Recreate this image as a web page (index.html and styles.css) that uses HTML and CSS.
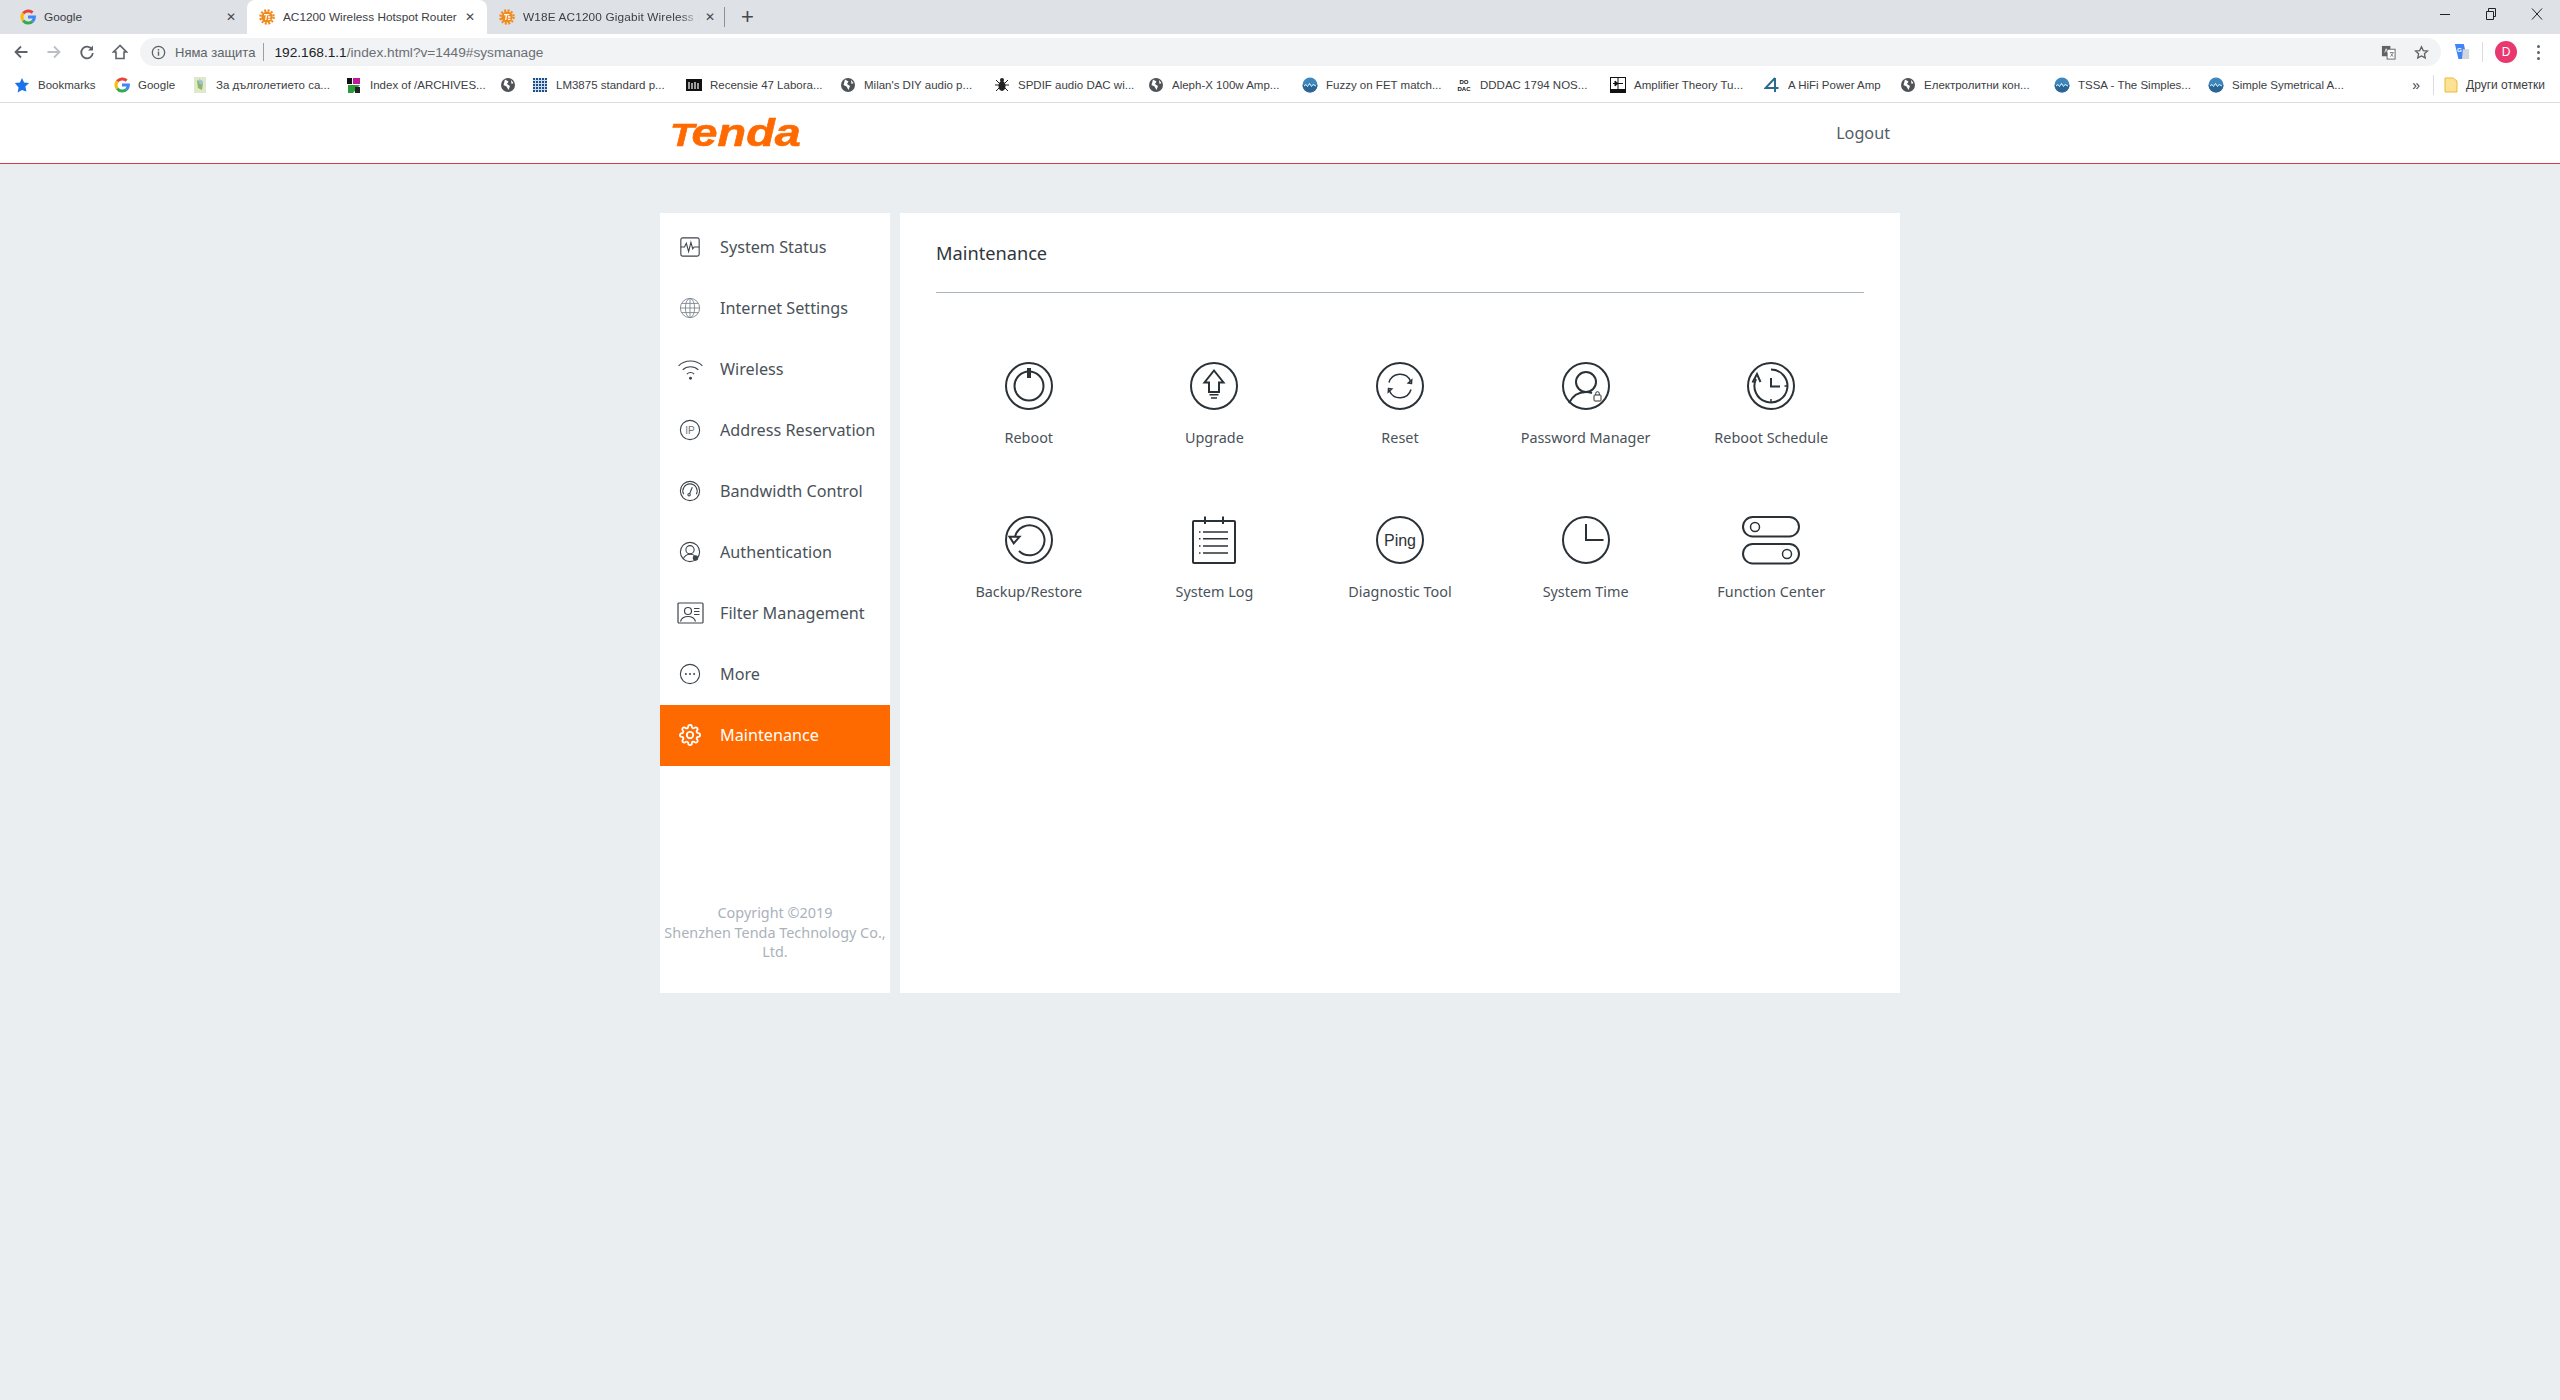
FILE: index.html
```html
<!DOCTYPE html>
<html lang="en">
<head>
  <meta charset="UTF-8">
  <title>AC1200 Wireless Hotspot Router</title>
  <link rel="stylesheet" href="styles.css">
</head>
<body>
  <svg class="defs" width="0" height="0">
    <defs>
      <g id="tenda-fav">
        <circle cx="8" cy="8" r="5.6" fill="#f08a1d"/>
        <circle cx="8" cy="8" r="6.6" fill="none" stroke="#f08a1d" stroke-width="2.4" stroke-dasharray="2 1.5"/>
        <path d="M5 5.6h5.4M7.6 5.6l-1 5.4M9 8h2.4M9 10.4h2.4" stroke="#fff" stroke-width="1.3" fill="none"/>
      </g>
      <g id="google-g" fill="none" stroke-width="3">
        <path d="M12.6 3.6A6.4 6.4 0 0 0 3.2 4.4" stroke="#ea4335"/>
        <path d="M3.2 4.4a6.4 6.4 0 0 0 0 7.2" stroke="#fbbc05"/>
        <path d="M3.2 11.6a6.4 6.4 0 0 0 9.4 .8" stroke="#34a853"/>
        <path d="M12.6 12.4A6.4 6.4 0 0 0 14.4 8H8" stroke="#4285f4"/>
      </g>
      <g id="earth">
        <circle cx="8" cy="8" r="7" fill="#4f5357"/>
        <path d="M5 2.5l3.5 2-1.5 2.5 3 2-1.500 4-2-3.500-3-1.500zM11 3l2.500 3-2 1z" fill="#fff"/>
      </g>
      <g id="wave">
        <circle cx="8" cy="8" r="7.500" fill="#3f86bd"/>
        <path d="M.5 8h15v0a7.500 7.500 0 0 1-15 0z" fill="#2a6596"/>
        <path d="M2 9l2-1.500 1.500 2 2-3 2 3 1.500-2 3 1.500" fill="none" stroke="#dff" stroke-width="1"/>
      </g>
    </defs>
  </svg>

  <div class="browser">
    <div class="tabstrip">
      <div class="tab tab-first">
        <svg class="fav" viewBox="0 0 16 16"><use href="#google-g"/></svg>
        <span class="tab-title">Google</span>
        <span class="tab-x">✕</span>
      </div>
      <div class="tab tab-active">
        <svg class="fav" viewBox="0 0 16 16"><use href="#tenda-fav"/></svg>
        <span class="tab-title">AC1200 Wireless Hotspot Router</span>
        <span class="tab-x">✕</span>
      </div>
      <div class="tab tab-last">
        <svg class="fav" viewBox="0 0 16 16"><use href="#tenda-fav"/></svg>
        <span class="tab-title">W18E AC1200 Gigabit Wireless H</span>
        <span class="tab-x">✕</span>
      </div>
      <span class="tab-new">+</span>
      <div class="win-controls">
        <svg width="12" height="12" viewBox="0 0 12 12"><path d="M1 6.500h10" stroke="#222" stroke-width="1"/></svg>
        <svg width="12" height="12" viewBox="0 0 12 12"><path d="M1.500 3.500h7v8h-7zM3.500 3.500v-3h7v8h-2" fill="none" stroke="#222"/></svg>
        <svg width="12" height="12" viewBox="0 0 12 12"><path d="M1 .5l10 11M11 .5l-10 11" stroke="#222" fill="none"/></svg>
      </div>
    </div>

    <div class="toolbar">
      <svg class="tool" viewBox="0 0 16 16"><path d="M14.500 8h-12M8 2.500L2.500 8 8 13.500" fill="none" stroke="#5f6368" stroke-width="1.800"/></svg>
      <svg class="tool" viewBox="0 0 16 16"><path d="M1.500 8h12M8 2.500L13.500 8 8 13.500" fill="none" stroke="#bcbfc3" stroke-width="1.800"/></svg>
      <svg class="tool" viewBox="0 0 16 16"><path d="M13 5.500A5.800 5.800 0 1 0 13.800 9" fill="none" stroke="#5f6368" stroke-width="1.800"/><path d="M14 1.500v5h-5z" fill="#5f6368"/></svg>
      <svg class="tool" viewBox="0 0 16 16"><path d="M8 1.500L1.500 8H4v6.500h8V8h2.500zM6.800 14.500" fill="none" stroke="#5f6368" stroke-width="1.600"/></svg>
      <div class="omnibox">
        <svg class="info" viewBox="0 0 16 16"><circle cx="8" cy="8" r="6.600" fill="none" stroke="#5f6368" stroke-width="1.400"/><path d="M8 7v4.500M8 4.200v1.600" stroke="#5f6368" stroke-width="1.500"/></svg>
        <span class="insecure">Няма защита</span>
        <span class="omni-sep"></span>
        <span class="url"><span class="url-host">192.168.1.1</span>/index.html?v=1449#sysmanage</span>
        <svg class="omni-icon omni-translate" viewBox="0 0 16 16"><rect x="1" y="1" width="9" height="11" fill="#5f6368"/><rect x="6.500" y="4.500" width="8.500" height="10.500" fill="#fff" stroke="#5f6368"/><path d="M4 8l1.500-4 1.500 4" stroke="#fff" fill="none" stroke-width=".8"/><path d="M9.500 8h4M10 12.500l3-4M10.500 9l2.500 3.500" stroke="#5f6368" fill="none" stroke-width=".8"/></svg>
        <svg class="omni-icon" viewBox="0 0 16 16"><path d="M8 1.800l1.900 4.100 4.500.5-3.300 3 .9 4.400L8 11.600l-4 2.200.9-4.400-3.300-3 4.500-.5z" fill="none" stroke="#5f6368" stroke-width="1.400"/></svg>
      </div>
      <svg class="ext" viewBox="0 0 18 18"><path d="M1 0h10l4 17H5z" fill="#4285f4"/><path d="M10 6h7v11h-8z" fill="#d3d6da"/><text x="3.500" y="9" class="ext-g">G</text></svg>
      <span class="tool-sep"></span>
      <span class="avatar">D</span>
      <span class="kebab"><i></i><i></i><i></i></span>
    </div>

    <div class="bookmarks">
      <div class="bm bm-first">
        <svg class="bm-icon" viewBox="0 0 16 16"><path d="M8 1l2.100 4.600 5 .5-3.700 3.400 1 4.900L8 12.900l-4.400 2.500 1-4.900L.9 6.100l5-.5z" fill="#1a73e8"/></svg>
        <span class="bm-label">Bookmarks</span>
      </div>
      <div class="bm bm-google">
        <svg class="bm-icon" viewBox="0 0 16 16"><use href="#google-g"/></svg>
        <span class="bm-label">Google</span>
      </div>
      <div class="bm">
        <svg class="bm-icon" viewBox="0 0 16 16"><rect x="2" width="12" height="16" fill="#dfe8c8"/><path d="M5 3l6 3-1 7-4-2z" fill="#8db46a"/><path d="M7 2l4 2-1 4-3-2z" fill="#9cc3dd"/></svg>
        <span class="bm-label">За дълголетието са...</span>
      </div>
      <div class="bm">
        <svg class="bm-icon" viewBox="0 0 16 16"><path d="M1 1h5v6H1z" fill="#111"/><path d="M7 1h7v6H7z" fill="#c0189a"/><path d="M2 8h12L7 16H2z" fill="#2c9a3a"/><path d="M9 10h5v6H9z" fill="#222"/></svg>
        <span class="bm-label">Index of /ARCHIVES...</span>
      </div>
      <div class="bm bm-bare">
        <svg class="bm-icon" viewBox="0 0 16 16"><use href="#earth"/></svg>
      </div>
      <div class="bm">
        <svg class="bm-icon" viewBox="0 0 16 16"><rect x="1" y="1" width="14" height="14" fill="#1d4e89"/><path d="M3.500 1v14M6.500 1v14M9.500 1v14M12.500 1v14M1 3.500h14M1 6.500h14M1 9.500h14M1 12.500h14" stroke="#cfe0f0"/></svg>
        <span class="bm-label">LM3875 standard p...</span>
      </div>
      <div class="bm">
        <svg class="bm-icon" viewBox="0 0 16 16"><rect y="2" width="16" height="12" fill="#111"/><path d="M3 5v7M6 6v6M9 5v7M12 6v6" stroke="#fff" stroke-width="1.200"/></svg>
        <span class="bm-label">Recensie 47 Labora...</span>
      </div>
      <div class="bm">
        <svg class="bm-icon" viewBox="0 0 16 16"><use href="#earth"/></svg>
        <span class="bm-label">Milan's DIY audio p...</span>
      </div>
      <div class="bm">
        <svg class="bm-icon" viewBox="0 0 16 16"><ellipse cx="8" cy="9" rx="3.500" ry="5" fill="#222"/><circle cx="8" cy="3" r="2" fill="#222"/><path d="M2 3l3 3M14 3l-3 3M1 8h4M15 8h-4M2 14l3-3M14 14l-3-3" stroke="#222"/></svg>
        <span class="bm-label">SPDIF audio DAC wi...</span>
      </div>
      <div class="bm">
        <svg class="bm-icon" viewBox="0 0 16 16"><use href="#earth"/></svg>
        <span class="bm-label">Aleph-X 100w Amp...</span>
      </div>
      <div class="bm">
        <svg class="bm-icon" viewBox="0 0 16 16"><use href="#wave"/></svg>
        <span class="bm-label">Fuzzy on FET match...</span>
      </div>
      <div class="bm">
        <svg class="bm-icon" viewBox="0 0 16 16"><text x="8" y="7" class="bm-tiny">DO</text><text x="8" y="14" class="bm-tiny">DAC</text></svg>
        <span class="bm-label">DDDAC 1794 NOS...</span>
      </div>
      <div class="bm">
        <svg class="bm-icon" viewBox="0 0 16 16"><rect x=".5" y=".5" width="15" height="15" fill="#fff" stroke="#111"/><path d="M8 1v11M3 6.500h10M5 4l3 2.500L5 9z" stroke="#111" fill="#111"/><rect x="1" y="12" width="14" height="3" fill="#111"/></svg>
        <span class="bm-label">Amplifier Theory Tu...</span>
      </div>
      <div class="bm bm-hifi">
        <svg class="bm-icon" viewBox="0 0 16 16"><path d="M11 1L1.500 11h13M11 1v14" fill="none" stroke="#2c6a8f" stroke-width="2"/></svg>
        <span class="bm-label">A HiFi Power Amp</span>
      </div>
      <div class="bm">
        <svg class="bm-icon" viewBox="0 0 16 16"><use href="#earth"/></svg>
        <span class="bm-label">Електролитни кон...</span>
      </div>
      <div class="bm">
        <svg class="bm-icon" viewBox="0 0 16 16"><use href="#wave"/></svg>
        <span class="bm-label">TSSA - The Simples...</span>
      </div>
      <div class="bm">
        <svg class="bm-icon" viewBox="0 0 16 16"><use href="#wave"/></svg>
        <span class="bm-label">Simple Symetrical A...</span>
      </div>
      <div class="bm-end">
        <span class="bm-more">»</span>
        <span class="bm-sep"></span>
        <svg class="bm-folder" viewBox="0 0 14 16"><path d="M1 1h8l4 3v11H1z" fill="#fde293" stroke="#e8b93c"/></svg>
        <span class="bm-label">Други отметки</span>
      </div>
    </div>
  </div>

  <header class="top">
    <div class="top-inner">
      <span class="logo"><span class="logo-t">T</span>enda</span>
      <a class="logout">Logout</a>
    </div>
  </header>

  <main class="wrap">
    <aside class="side">
      <nav class="menu">
        <a class="menu-item">
          <svg class="menu-icon" viewBox="0 0 24 24"><rect x="2" y="2" width="20" height="20" rx="2" class="ln"/><path d="M2 12h4l2-4 2.500 9 2.500-10 2 7 1.500-2H22" class="ln"/></svg>
          System Status
        </a>
        <a class="menu-item">
          <svg class="menu-icon muted" viewBox="0 0 24 24"><circle cx="12" cy="12" r="10.500" class="ln"/><ellipse cx="12" cy="12" rx="5" ry="10.500" class="ln"/><path d="M12 1.500v21M1.500 12h21M3 7h18M3 17h18" class="ln"/></svg>
          Internet Settings
        </a>
        <a class="menu-item">
          <svg class="menu-icon menu-icon-wide" viewBox="0 0 28 24"><path d="M1 8.500C8 1.500 20 1.500 27 8.500M5.500 13C10 8.500 18 8.500 22.500 13M10 17.500c2.200-2.200 5.800-2.200 8 0" class="ln"/><circle cx="14" cy="22" r="1.600" class="dot"/></svg>
          Wireless
        </a>
        <a class="menu-item">
          <svg class="menu-icon" viewBox="0 0 24 24"><circle cx="12" cy="12" r="10.500" class="ln"/><text x="12" y="16" class="ip-text">IP</text></svg>
          Address Reservation
        </a>
        <a class="menu-item">
          <svg class="menu-icon" viewBox="0 0 24 24"><circle cx="12" cy="12" r="10.500" class="ln"/><path d="M5 15.500a7.800 7.800 0 1 1 14 0" class="ln"/><path d="M14.500 8L11.500 15" class="ln"/><circle cx="11" cy="16" r="1.300" class="ln"/></svg>
          Bandwidth Control
        </a>
        <a class="menu-item">
          <svg class="menu-icon" viewBox="0 0 24 24"><circle cx="12" cy="12" r="10.500" class="ln"/><circle cx="12" cy="9.500" r="4.500" class="ln"/><path d="M4.500 19.500c1.500-3 4.500-5 7.500-5s4 .5 5 1.500" class="ln"/><circle cx="18" cy="18.500" r="3" class="dot"/></svg>
          Authentication
        </a>
        <a class="menu-item">
          <svg class="menu-icon menu-icon-wide" viewBox="0 0 27 22"><rect x="1" y="1" width="25" height="20" rx="1" class="ln"/><circle cx="11" cy="9" r="3.500" class="ln"/><path d="M3.500 19.500c1-3.500 4-5 7.500-5s6.500 1.500 7.500 5M17 6.500h5.500M17 9.500h5.500M17 12.500h5.500" class="ln"/></svg>
          Filter Management
        </a>
        <a class="menu-item">
          <svg class="menu-icon" viewBox="0 0 24 24"><circle cx="12" cy="12" r="10.500" class="ln"/><circle cx="7.500" cy="12" r="1.100" class="dot"/><circle cx="12" cy="12" r="1.100" class="dot"/><circle cx="16.500" cy="12" r="1.100" class="dot"/></svg>
          More
        </a>
        <a class="menu-item active">
          <svg class="menu-icon" viewBox="0 0 24 24"><path d="M19.400 15a1.650 1.650 0 0 0 .33 1.820l.06.06a2 2 0 0 1 0 2.830 2 2 0 0 1-2.830 0l-.06-.06a1.650 1.650 0 0 0-1.820-.33 1.650 1.650 0 0 0-1 1.510V21a2 2 0 0 1-2 2 2 2 0 0 1-2-2v-.09A1.650 1.650 0 0 0 9 19.400a1.650 1.650 0 0 0-1.820.33l-.06.06a2 2 0 0 1-2.830 0 2 2 0 0 1 0-2.830l.06-.06a1.650 1.650 0 0 0 .33-1.820 1.650 1.650 0 0 0-1.510-1H3a2 2 0 0 1-2-2 2 2 0 0 1 2-2h.09A1.650 1.650 0 0 0 4.600 9a1.650 1.650 0 0 0-.33-1.820l-.06-.06a2 2 0 0 1 0-2.830 2 2 0 0 1 2.830 0l.06.06a1.650 1.650 0 0 0 1.820.33H9a1.650 1.650 0 0 0 1-1.510V3a2 2 0 0 1 2-2 2 2 0 0 1 2 2v.09a1.650 1.650 0 0 0 1 1.510 1.650 1.650 0 0 0 1.820-.33l.06-.06a2 2 0 0 1 2.830 0 2 2 0 0 1 0 2.830l-.06.06a1.650 1.650 0 0 0-.33 1.820V9a1.650 1.650 0 0 0 1.510 1H21a2 2 0 0 1 2 2 2 2 0 0 1-2 2h-.09a1.650 1.650 0 0 0-1.510 1z" class="ln"/><circle cx="12" cy="12" r="3.500" class="ln"/></svg>
          Maintenance
        </a>
      </nav>
      <p class="copyright">Copyright ©2019<br>Shenzhen Tenda Technology Co., Ltd.</p>
    </aside>

    <section class="panel">
      <h2 class="panel-title">Maintenance</h2>
      <div class="tools">
        <a class="tool-item">
          <svg class="tool-icon" viewBox="0 0 48 48"><circle cx="24" cy="24" r="23" class="ln"/><circle cx="24" cy="24" r="14.500" class="ln"/><path d="M24 6v10" class="ln heavy"/></svg>
          <span>Reboot</span>
        </a>
        <a class="tool-item">
          <svg class="tool-icon" viewBox="0 0 48 48"><circle cx="24" cy="24" r="23" class="ln"/><path d="M24 8.500L14.500 20.500H19V30H29V20.500H33.500z" class="ln"/><path d="M19.500 32.800h9M21 36h6" class="ln thin"/></svg>
          <span>Upgrade</span>
        </a>
        <a class="tool-item">
          <svg class="tool-icon" viewBox="0 0 48 48"><circle cx="24" cy="24" r="23" class="ln"/><path d="M13 20.500A11.500 11.500 0 0 1 34.500 19M35 27.500A11.500 11.500 0 0 1 13.500 29" class="ln thin"/><path d="M35.500 21.500l-3.200-.5 3.400-3zM12.500 26.500l3.200.5-3.400 3z" class="ln thin"/></svg>
          <span>Reset</span>
        </a>
        <a class="tool-item">
          <svg class="tool-icon" viewBox="0 0 48 48"><circle cx="24" cy="24" r="23" class="ln"/><circle cx="24" cy="20" r="10" class="ln"/><path d="M7 41c3-6 9-11 17-11 2 0 4 .3 6 1" class="ln"/><rect x="32" y="33" width="7" height="6" rx=".8" class="ln hair"/><path d="M33.700 33v-1.500a1.800 1.800 0 0 1 3.600 0V33" class="ln hair"/></svg>
          <span>Password Manager</span>
        </a>
        <a class="tool-item">
          <svg class="tool-icon" viewBox="0 0 48 48"><circle cx="24" cy="24" r="23" class="ln"/><path d="M24 7.500A16.500 16.500 0 1 1 9 17" class="ln"/><path d="M5.500 20.500L10 12l3.500 8" class="ln"/><path d="M24 16v8.500h9" class="ln"/><path d="M24 37v3M37.500 24h3" class="ln thin"/></svg>
          <span>Reboot Schedule</span>
        </a>
        <a class="tool-item">
          <svg class="tool-icon" viewBox="0 0 48 48"><circle cx="24" cy="24" r="23" class="ln"/><path d="M10 20.500A15 15 0 1 1 14 35" class="ln"/><path d="M4.500 20.700h10L8.700 27.300z" class="ln"/></svg>
          <span>Backup/Restore</span>
        </a>
        <a class="tool-item">
          <svg class="tool-icon" viewBox="0 0 48 48"><rect x="3" y="5" width="42" height="42" rx="1" class="ln"/><path d="M15 .5V8M33 .5V8" class="ln"/><path d="M13 16h25M13 22.700h25M13 30h25M13 37h25" class="ln thin"/><path d="M9 16h1.500M9 22.700h1.500M9 30h1.500M9 37h1.500" class="ln thin"/></svg>
          <span>System Log</span>
        </a>
        <a class="tool-item">
          <svg class="tool-icon" viewBox="0 0 48 48"><circle cx="24" cy="24" r="23" class="ln"/><text x="24" y="29.500" class="ping-text">Ping</text></svg>
          <span>Diagnostic Tool</span>
        </a>
        <a class="tool-item">
          <svg class="tool-icon" viewBox="0 0 48 48"><circle cx="24" cy="24" r="23" class="ln"/><path d="M24 8v16h17.500" class="ln"/></svg>
          <span>System Time</span>
        </a>
        <a class="tool-item">
          <svg class="tool-icon tool-icon-wide" viewBox="0 0 58 48"><rect x="1" y="1" width="56" height="19.500" rx="9.700" class="ln"/><rect x="1" y="28" width="56" height="19.500" rx="9.700" class="ln"/><circle cx="13" cy="11" r="4.500" class="ln thin"/><circle cx="45" cy="38" r="4.500" class="ln thin"/></svg>
          <span>Function Center</span>
        </a>
      </div>
    </section>
  </main>
</body>
</html>
```

FILE: styles.css
```css
* {
  box-sizing: border-box;
}

body {
  margin: 0;
  min-height: 1400px;
  background: #eaeef1;
  font-family: "Noto Sans", "Open Sans", sans-serif;
  color: #4a5259;
}

.defs {
  display: block;
  height: 0;
}

/* === Browser chrome === */
.browser {
  font-family: "Liberation Sans", Arial, sans-serif;
  font-size: 11.8px;
  color: #3c4043;
}

.tabstrip {
  display: flex;
  align-items: center;
  height: 34px;
  background: #dee1e6;
}

.tab {
  display: flex;
  align-items: center;
  height: 34px;
  flex: none;
}

.tab-first {
  width: 247px;
  padding-left: 20px;
}

.tab-active {
  width: 240px;
  padding-left: 12px;
  background: #fff;
  border-radius: 8px 8px 0 0;
}

.tab-last {
  width: 238px;
  padding-left: 12px;
  border-right: 1px solid #8d9095;
  height: 20px;
}

.fav {
  width: 16px;
  height: 16px;
  flex: none;
  margin-right: 8px;
}

.tab-title {
  width: 182px;
  white-space: nowrap;
  overflow: hidden;
}

.tab-last .tab-title {
  letter-spacing: .15px;
  -webkit-mask-image: linear-gradient(to right, #000 158px, transparent 176px);
}

.tab-x {
  font-size: 12px;
  color: #45484c;
  font-family: "DejaVu Sans", sans-serif;
}

.tab-new {
  margin-left: 16px;
  font-size: 22px;
  color: #45484c;
  line-height: 20px;
}

.win-controls {
  display: flex;
  gap: 34px;
  margin-left: auto;
  padding: 0 17px 6px 0;
}

.toolbar {
  display: flex;
  align-items: center;
  height: 36px;
  background: #fff;
  padding-left: 13px;
}

.tool {
  width: 16px;
  height: 16px;
  flex: none;
  margin-right: 17px;
}

.omnibox {
  display: flex;
  align-items: center;
  flex: 1;
  height: 28px;
  margin-left: -5px;
  padding: 0 12px 0 11px;
  background: #f1f3f4;
  border-radius: 14px;
}

.info {
  width: 15px;
  height: 15px;
  margin-right: 9px;
}

.insecure {
  color: #5f6368;
  font-size: 13px;
}

.omni-sep {
  width: 1px;
  height: 18px;
  margin: 0 10px 0 8px;
  background: #9aa0a6;
}

.url {
  flex: 1;
  font-size: 13.700px;
  color: #6b6f74;
}

.url-host {
  color: #202124;
}

.omni-icon {
  width: 15px;
  height: 15px;
  margin-left: 18px;
}

.ext {
  width: 16px;
  height: 18px;
  margin-left: 13px;
}

.ext-g {
  font-size: 7px;
  font-weight: 700;
  fill: #fff;
}

.tool-sep {
  width: 1px;
  height: 20px;
  margin: 0 12px;
  background: #dadce0;
}

.avatar {
  width: 22px;
  height: 22px;
  border-radius: 50%;
  background: #e8386f;
  color: #fff;
  font-size: 12px;
  line-height: 22px;
  text-align: center;
}

.kebab {
  display: flex;
  flex-direction: column;
  gap: 3px;
  margin: 0 20px;
}

.kebab i {
  width: 3px;
  height: 3px;
  border-radius: 50%;
  background: #5f6368;
}

.bookmarks {
  display: flex;
  align-items: center;
  gap: 16px;
  height: 33px;
  padding: 0 15px 3px 14px;
  background: #fff;
  border-bottom: 1px solid #dadce0;
}

.bm {
  display: flex;
  align-items: center;
  gap: 8px;
  flex: none;
}

.bm-icon {
  width: 16px;
  height: 16px;
  flex: none;
}

.bm-tiny {
  font-size: 6px;
  font-weight: 700;
  text-anchor: middle;
  fill: #111;
}

.bm-label {
  display: block;
  width: 114px;
  font-size: 11.500px;
  color: #3c4043;
  white-space: nowrap;
}

.bm-first .bm-label {
  width: 60px;
}

.bm-google .bm-label {
  width: 38px;
}

.bm-hifi .bm-label {
  width: 96px;
}

.bm-end {
  display: flex;
  align-items: center;
  margin-left: auto;
}

.bm-more {
  font-size: 14px;
  margin-right: 13px;
}

.bm-sep {
  width: 1px;
  height: 20px;
  margin-right: 10px;
  background: #dadce0;
}

.bm-folder {
  width: 14px;
  height: 16px;
  margin-right: 8px;
}

.bm-end .bm-label {
  width: auto;
  font-size: 12px;
}

/* === Router page === */
.top {
  height: 61px;
  background: #fff;
  border-bottom: 1px solid #d63c48;
}

.top-inner {
  display: flex;
  justify-content: space-between;
  align-items: center;
  width: 1240px;
  height: 100%;
  margin: 0 auto;
  padding: 0 10px;
}

.logo {
  display: block;
  font-family: "Liberation Sans", Arial, sans-serif;
  font-size: 38px;
  font-weight: 700;
  font-style: italic;
  line-height: 1;
  color: #ff6a00;
  -webkit-text-stroke: .6px #ff6a00;
  transform: scaleX(1.23);
  transform-origin: left center;
}

.logo-t {
  font-size: 32px;
  letter-spacing: -2px;
}

.logout {
  font-size: 16.200px;
  color: #555c63;
}

.wrap {
  display: flex;
  gap: 10px;
  width: 1240px;
  height: 780px;
  margin: 49px auto 0;
}

.side {
  display: flex;
  flex-direction: column;
  width: 230px;
  padding-top: 4px;
  background: #fff;
}

.menu-item {
  display: flex;
  align-items: center;
  gap: 19px;
  height: 61px;
  padding: 0 0 2px 19px;
  font-size: 16.200px;
  color: #4a5259;
  white-space: nowrap;
}

.menu-icon {
  width: 22px;
  height: 22px;
  flex: none;
}

.menu-icon-wide {
  width: 27px;
  margin: 0 -3px 0 -2px;
}

.menu-icon .ln {
  fill: none;
  stroke: #3d454c;
  stroke-width: 1.2;
}

.menu-icon .dot {
  fill: #3d454c;
}

.muted .ln {
  stroke: #808890;
  stroke-width: 1;
}

.ip-text {
  font-family: "Liberation Sans", Arial, sans-serif;
  font-size: 11px;
  text-anchor: middle;
  fill: #6d757c;
}

.active {
  background: #ff6a00;
  color: #fff;
}

.active .menu-icon .ln {
  stroke: #fff;
  stroke-width: 2;
}

.copyright {
  margin: auto 0 0;
  padding: 0 0 31px;
  font-size: 14.400px;
  line-height: 19.600px;
  text-align: center;
  color: #aab2ba;
}

.panel {
  flex: 1;
  padding: 0 36px;
  background: #fff;
}

.panel-title {
  height: 80px;
  margin: 0;
  padding-top: 27px;
  font-size: 18.200px;
  line-height: 26px;
  font-weight: 400;
  color: #2f363c;
  border-bottom: 1px solid #aab4bc;
}

.tools {
  display: grid;
  grid-template-columns: repeat(5, 1fr);
  grid-auto-rows: 154px;
  padding-top: 69px;
}

.tool-item {
  display: flex;
  flex-direction: column;
  align-items: center;
  gap: 18px;
  font-size: 14.400px;
  line-height: 20px;
  color: #4a5259;
}

.tool-icon {
  width: 48px;
  height: 48px;
  overflow: visible;
}

.tool-icon-wide {
  width: 58px;
}

.tool-icon .ln {
  fill: none;
  stroke: #2a3238;
  stroke-width: 2;
}

.tool-icon .heavy {
  stroke-width: 4;
}

.tool-icon .thin {
  stroke-width: 1.5;
}

.tool-icon .hair {
  stroke-width: 1;
}

.ping-text {
  font-family: "Liberation Sans", Arial, sans-serif;
  font-size: 16px;
  text-anchor: middle;
  fill: #2a3238;
}
```
